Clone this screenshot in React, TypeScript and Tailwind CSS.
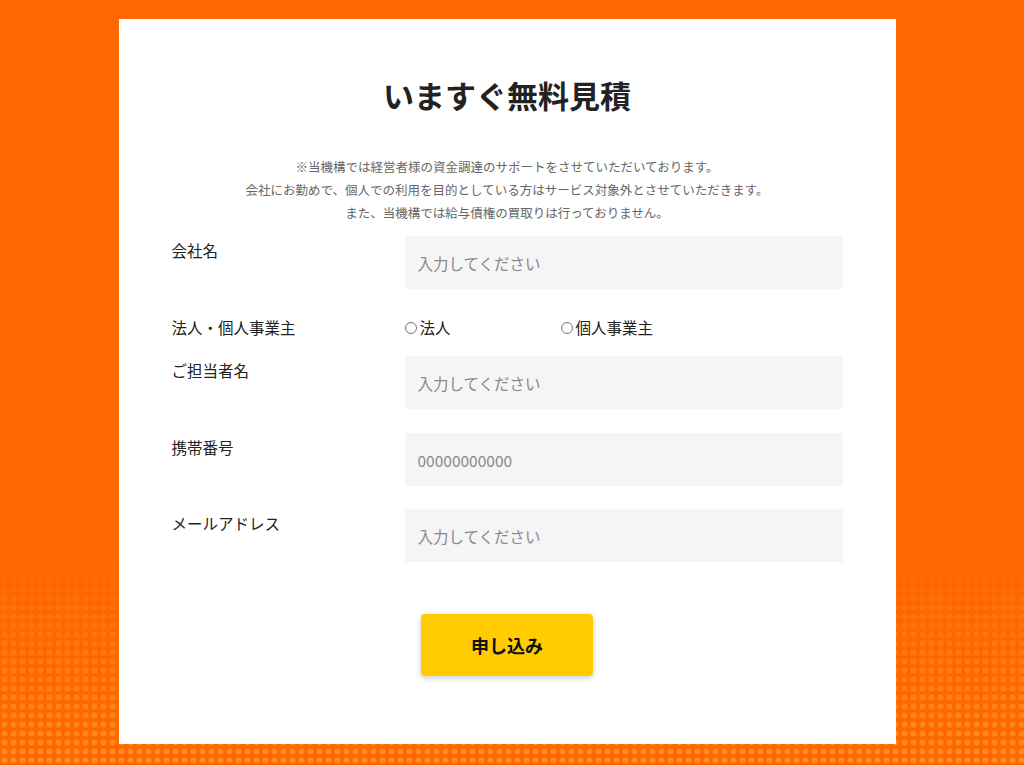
const font = { fontFamily: '"Noto Sans CJK JP", "Noto Sans", sans-serif' };

function Field({ label, placeholder }: { label: string; placeholder: string }) {
  return (
    <div className="flex items-start">
      <div className="w-[233px] shrink-0 pt-[3px] text-[15.5px] text-[#222]">{label}</div>
      <input
        type="text"
        placeholder={placeholder}
        className="h-[53px] flex-1 bg-[#f5f5f5] px-[13px] text-[15.5px] text-[#333] placeholder:text-[#8a8a8a] focus:outline-none"
      />
    </div>
  );
}

function Radio({ label }: { label: string }) {
  return (
    <label className="flex w-[156px] items-center gap-[3px] text-[15.5px] text-[#222]">
      <span className="h-[12px] w-[12px] rounded-full border-[1.5px] border-[#777] bg-white" />
      <span>{label}</span>
    </label>
  );
}

export default function App() {
  return (
    <div
      className="flex min-h-[765px] w-full justify-center pt-[19px] pr-[10px] pb-[21px] bg-[linear-gradient(to_bottom,#ff6800_72%,rgba(255,104,0,0.1)_100%),radial-gradient(circle,#ff9222_2.7px,transparent_3.3px),linear-gradient(#ff6800,#ff6800)] bg-[length:100%_100%,9px_9px,100%_100%]"
      style={font}
    >
      <div className="w-[777px] bg-white px-[53px] pt-[56px] pb-[67px]">
        <h1 className="text-center text-[31px] font-bold leading-[40px] text-[#222]">いますぐ無料見積</h1>

        <div className="mt-[40px] text-center text-[12.5px] leading-[23px] text-[#666]">
          <p>※当機構では経営者様の資金調達のサポートをさせていただいております。</p>
          <p>会社にお勤めで、個人での利用を目的としている方はサービス対象外とさせていただきます。</p>
          <p>また、当機構では給与債権の買取りは行っておりません。</p>
        </div>

        <div className="mt-[12px]">
          <Field label="会社名" placeholder="入力してください" />

          <div className="mt-[27px] flex items-center">
            <div className="w-[233px] shrink-0 text-[15.5px] text-[#222]">法人・個人事業主</div>
            <Radio label="法人" />
            <Radio label="個人事業主" />
          </div>

          <div className="mt-[17px]">
            <Field label="ご担当者名" placeholder="入力してください" />
          </div>
          <div className="mt-[24px]">
            <Field label="携帯番号" placeholder="00000000000" />
          </div>
          <div className="mt-[23px]">
            <Field label="メールアドレス" placeholder="入力してください" />
          </div>
        </div>

        <div className="mt-[52px] flex justify-center">
          <button className="h-[62px] w-[172px] rounded-[4px] bg-[#ffcc00] text-[18px] font-bold text-[#111] shadow-[0_2px_6px_rgba(0,0,0,0.2)]">
            申し込み
          </button>
        </div>
      </div>
    </div>
  );
}
